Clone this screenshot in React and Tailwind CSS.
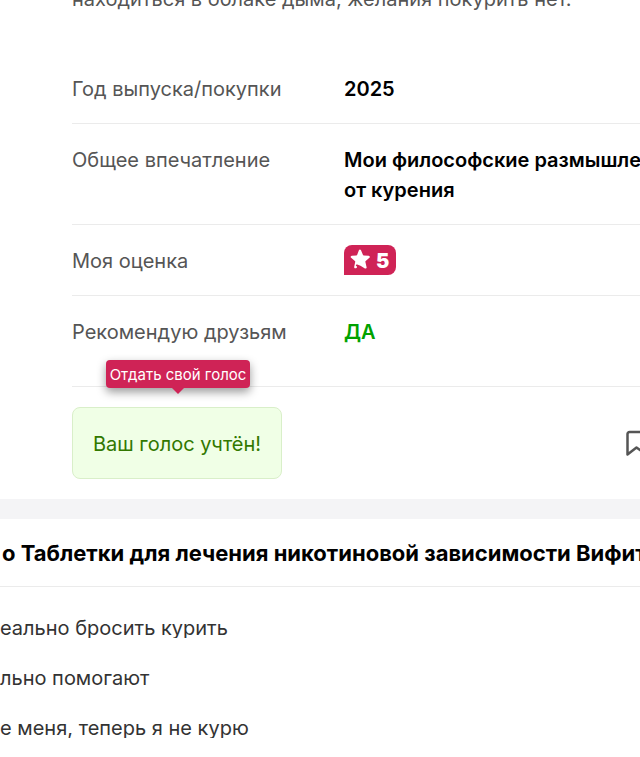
import React from 'react';

const rows = [
    {label: 'Год выпуска/покупки', value: '2025'},
    {label: 'Общее впечатление', value: <>Мои философские размышления<br/>от курения</>},
    {label: 'Моя оценка', rating: 5},
    {label: 'Рекомендую друзьям', value: <span className="text-[#00a200]">ДА</span>, last: true},
];

const reviews = [
    'еально бросить курить',
    'льно помогают',
    'е меня, теперь я не курю',
];

function Rating({value}) {
    return (
        <span className="flex h-[30px] w-[52px] items-center rounded-lg rounded-bl-none bg-[#cf2356] pl-1 pt-0.5 font-black text-white">
            <svg className="mr-1 size-6 shrink-0 -translate-y-px" viewBox="0 0 24 24" fill="currentColor">
                <path d="M10.9 2.3c.4-1 1.7-1 2.1 0l1.9 4.4c.2.4.5.6.9.7l4.9.4c1.1.1 1.5 1.3.7 2l-3.7 3.3c-.3.3-.4.6-.3 1l1.2 5.1c.2 1.1-.8 1.8-1.7 1.2l-4.4-2.6-3.2-1.3c-.9-.3-1.6.5-1.4 1.2.1.5.6.7 1.1.6.4 1.7-2.2 2.9-2.8 1.1-.1-.3 0-.7.1-1.1l.9-4.2c.1-.4 0-.8-.3-1.1L3.1 9.8c-.8-.7-.4-1.9.7-2l4.5-.4c.4 0 .7-.3.9-.7z"/>
            </svg>
            {value}
        </span>
    );
}

function App() {
    return (
        <div className="overflow-hidden bg-white font-['Inter','Noto_Sans',sans-serif] text-xl leading-[30px] text-black">
            <article className="pb-5 pl-[72px]">
                <p className="-mt-4 mb-[39px] whitespace-nowrap text-[#555]">
                    находиться в облаке дыма, желания покурить нет.
                </p>

                <dl>
                    {rows.map((row) => (
                        <div key={row.label} className={`flex border-b border-[#ebebeb] pt-5 ${row.last ? 'pb-[39px]' : 'pb-[19px]'}`}>
                            <dt className="w-[272px] shrink-0 pt-px text-[#555]">{row.label}</dt>
                            <dd className={`whitespace-nowrap font-semibold ${row.rating ? '' : 'pt-px'}`}>
                                {row.rating ? <Rating value={row.rating}/> : row.value}
                            </dd>
                        </div>
                    ))}
                </dl>

                <div className="mt-5 flex items-center justify-between">
                    <div className="relative">
                        <button type="button" className="h-[72px] w-[210px] rounded-lg border border-[#d9efc9] bg-[#f0ffe6] pt-0.5 text-[#327800]">
                            Ваш голос учтён!
                        </button>
                        {/* Подсказка над кнопкой */}
                        <div role="tooltip" className="absolute bottom-full left-[34px] mb-[19px] flex h-7 w-36 items-center justify-center whitespace-nowrap rounded bg-[#cf2356] pt-0.5 text-[15px] text-white shadow-[0_4px_10px_rgba(0,0,0,0.4)]">
                            Отдать свой голос
                            <svg className="absolute left-1/2 top-full -translate-x-1/2" width="12" height="6" viewBox="0 0 12 6" fill="#cf2356">
                                <path d="M0 0h12L6 6z"/>
                            </svg>
                        </div>
                    </div>
                    <button type="button" aria-label="В закладки" className="-mr-2 shrink-0 text-[#555]">
                        <svg width="22" height="26" viewBox="0 0 22 26" fill="none" stroke="currentColor" strokeWidth="2.5" strokeLinejoin="round">
                            <path d="M1.5 4a2 2 0 0 1 2-2h15a2 2 0 0 1 2 2v20.5l-10-7-9 7z"/>
                        </svg>
                    </button>
                </div>
            </article>

            <section className="border-t-20 border-[#f4f4f6] pb-5">
                <h2 className="whitespace-nowrap border-b border-[#ebebeb] pb-[18px] pl-0.5 pt-[19px] text-[22px] font-bold">
                    о Таблетки для лечения никотиновой зависимости Вифитон
                </h2>
                <ul className="flex flex-col gap-[30px] pt-[31px]">
                    {reviews.map((text) => (
                        <li key={text} className="h-5 overflow-hidden leading-5">
                            <a href="#" className="text-[#333]">{text}</a>
                        </li>
                    ))}
                </ul>
            </section>
        </div>
    );
}

export default App;
